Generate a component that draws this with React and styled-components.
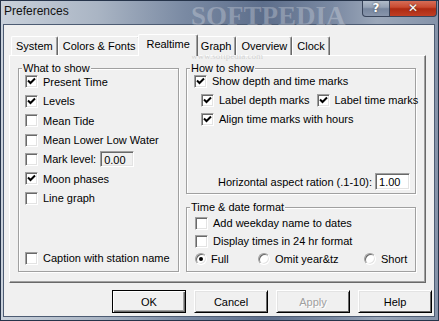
import React from "react";
import styled, { createGlobalStyle } from "styled-components";

const GlobalStyle = createGlobalStyle`
  html, body {
    margin: 0;
    padding: 0;
  }
  body {
    width: 439px;
    height: 321px;
    overflow: hidden;
    font-family: "Liberation Sans", Arial, sans-serif;
    font-size: 11px;
    color: #000;
  }
`;

const Window = styled.div`
  position: relative;
  width: 439px;
  height: 321px;
  box-sizing: border-box;
  display: flex;
  flex-direction: column;
  padding: 0 3px 3px 2px;
  border: 1px solid #26344a;
  background: linear-gradient(
    90deg,
    #c9d1db 0%,
    #aab5c4 22%,
    #7a8aa3 42%,
    #5d6e8b 60%,
    #7a89a2 76%,
    #9ba7b9 86%,
    #8593a9 100%
  );
  overflow: hidden;
`;

const TitleBar = styled.div`
  height: 23px;
  flex: none;
  display: flex;
  align-items: flex-start;
  justify-content: space-between;
`;

const Title = styled.div`
  font-family: "Liberation Sans", Arial, sans-serif;
  font-size: 12px;
  line-height: 14px;
  padding: 3px 0 0 1px;
  color: #111;
`;

const Caps = styled.div`
  position: relative;
  z-index: 3;
  display: flex;
  margin: -1px -2px 0 0;
`;

const HelpCap = styled.div`
  width: 28px;
  height: 17px;
  box-sizing: border-box;
  display: flex;
  align-items: center;
  justify-content: center;
  border: 1px solid #38445a;
  border-top: none;
  border-radius: 0 0 0 4px;
  background-color: #8a98ad;
  background-image: linear-gradient(180deg, #b4bfcd 0%, #95a2b5 45%, #77869e 55%, #8895ab 100%);
  color: #fff;
  font: bold 12px "DejaVu Sans", sans-serif;
  text-shadow: 0 0 2px #333;
`;

const CloseCap = styled(HelpCap)`
  width: 47px;
  border-left: none;
  border-radius: 0 0 4px 0;
  background-color: #c03e24;
  background-image: linear-gradient(180deg, #d8735d 0%, #c94a30 45%, #ad2a12 55%, #c03e24 100%);
`;

const Watermark = styled.div`
  position: absolute;
  left: 190px;
  top: 1px;
  font-family: "Liberation Serif", serif;
  font-weight: bold;
  font-size: 27px;
  line-height: 28px;
  color: rgba(255, 255, 255, 0.25);
  pointer-events: none;
`;

const WatermarkUrl = styled.div`
  position: absolute;
  left: 190px;
  top: 50px;
  font-family: "Liberation Serif", serif;
  font-size: 9px;
  color: rgba(150, 150, 150, 0.35);
  pointer-events: none;
`;

const Client = styled.div`
  flex: 1;
  display: flex;
  flex-direction: column;
  background: #f0f0f0;
  border: 1px solid #4d5c73;
  padding: 8px 4px 3px 5px;
`;

const TabStrip = styled.div`
  height: 22px;
  display: flex;
  align-items: flex-end;
  padding-left: 2px;
`;

const Tab = styled.div`
  position: relative;
  z-index: ${(p) => (p.$active ? 2 : 1)};
  height: ${(p) => (p.$active ? 22 : 19)}px;
  margin: ${(p) => (p.$active ? "0 -2px -1px -2px" : "0")};
  box-sizing: border-box;
  padding: ${(p) => (p.$active ? "3px 7px 0" : "0 4px")};
  display: flex;
  align-items: ${(p) => (p.$active ? "flex-start" : "center")};
  background: #f0f0f0;
  border-top: 1px solid #fff;
  border-left: 1px solid #fff;
  border-right: 1px solid #696969;
  box-shadow: inset -1px 0 0 #a0a0a0;
  border-radius: 2px 2px 0 0;
  white-space: nowrap;
`;

const Pane = styled.div`
  flex: 1;
  display: flex;
  gap: 7px;
  margin-right: 4px;
  padding: 12px 9px 10px 8px;
  border-top: 1px solid #fff;
  border-left: 1px solid #fff;
  border-right: 1px solid #696969;
  border-bottom: 1px solid #696969;
  box-shadow: inset -1px -1px 0 #a0a0a0;
`;

const Column = styled.div`
  display: flex;
  flex-direction: column;
  width: ${(p) => p.$w}px;
`;

const GroupBox = styled.div`
  flex: ${(p) => (p.$grow ? 1 : "none")};
  height: ${(p) => (p.$h ? `${p.$h}px` : "auto")};
  margin-top: ${(p) => p.$mt || 0}px;
  box-sizing: border-box;
  display: flex;
  flex-direction: column;
  border: 1px solid #a0a0a0;
  box-shadow: 1px 1px 0 #fff, inset 1px 1px 0 #fff;
  padding: 0 0 ${(p) => p.$pb || 0}px ${(p) => p.$pl}px;
`;

const Caption = styled.div`
  align-self: flex-start;
  margin: -7px 0 ${(p) => p.$mb}px ${(p) => 3 - p.$pl}px;
  padding: 0 1px;
  line-height: 12px;
  background: #f0f0f0;
`;

const Row = styled.div`
  height: ${(p) => p.$h}px;
  display: flex;
  align-items: center;
  padding-left: ${(p) => p.$indent || 0}px;
  margin-top: ${(p) => (p.$push ? "auto" : "0")};
  white-space: nowrap;
`;

const Option = styled.div`
  display: flex;
  align-items: center;
  gap: ${(p) => p.$gap ?? 5}px;
  width: ${(p) => (p.$w ? `${p.$w}px` : "auto")};
  margin-right: ${(p) => p.$mr || 0}px;
`;

const Box = styled.span`
  width: 13px;
  height: 13px;
  box-sizing: border-box;
  flex: none;
  background: #fff;
  border-top: 1px solid #a0a0a0;
  border-left: 1px solid #a0a0a0;
  border-right: 1px solid #fff;
  border-bottom: 1px solid #fff;
  box-shadow: inset 1px 1px 0 #696969, inset -1px -1px 0 #e3e3e3;
  display: flex;
  align-items: center;
  justify-content: center;
`;

const Round = styled.span`
  width: 12px;
  height: 12px;
  flex: none;
  box-sizing: border-box;
  border-radius: 50%;
  background: #fff;
  border: 1px solid;
  border-color: #a0a0a0 #fff #fff #a0a0a0;
  box-shadow: inset 1px 1px 0 #696969, inset -1px -1px 0 #e3e3e3;
  display: flex;
  align-items: center;
  justify-content: center;
  &::after {
    content: "";
    width: 4px;
    height: 4px;
    border-radius: 50%;
    background: ${(p) => (p.$on ? "#000" : "transparent")};
  }
`;

const Field = styled.div`
  width: ${(p) => p.$w}px;
  height: ${(p) => p.$h}px;
  box-sizing: border-box;
  margin-left: ${(p) => p.$ml}px;
  padding: 1px 0 0 3px;
  display: flex;
  align-items: center;
  background: ${(p) => (p.$disabled ? "#f0f0f0" : "#fff")};
  border-top: 1px solid #a0a0a0;
  border-left: 1px solid #a0a0a0;
  border-right: 1px solid #fff;
  border-bottom: 1px solid #fff;
  box-shadow: inset 1px 1px 0 #696969, inset -1px -1px 0 #e3e3e3;
`;

const AspectRow = styled.div`
  margin-top: auto;
  height: 21px;
  display: flex;
  align-items: center;
  padding-left: 24px;
`;

const Footer = styled.div`
  height: 23px;
  margin: 7px -2px 0 0;
  display: flex;
  justify-content: flex-end;
  gap: 8px;
`;

const Button = styled.div`
  width: 74px;
  height: 23px;
  box-sizing: border-box;
  display: flex;
  align-items: center;
  justify-content: center;
  border: 1px solid;
  border-color: ${(p) => (p.$default ? "#000" : "#fff #000 #000 #fff")};
  box-shadow: ${(p) =>
    p.$default
      ? "inset 1px 1px 0 #fff, inset -1px -1px 0 #696969, inset -2px -2px 0 #a0a0a0"
      : "inset 1px 1px 0 #e3e3e3, inset -1px -1px 0 #696969"};
  color: ${(p) => (p.$disabled ? "#a0a0a0" : "#000")};
  text-shadow: ${(p) => (p.$disabled ? "1px 1px 0 #fff" : "none")};
  background: #f0f0f0;
`;

function Check({ on }) {
  return (
    <Box>
      {on && (
        <svg width="9" height="9" viewBox="0 0 9 9">
          <path d="M1 3.5 L3.5 6 L8 1.5" stroke="#000" strokeWidth="2" fill="none" />
        </svg>
      )}
    </Box>
  );
}

function CheckItem({ on, children }) {
  return (
    <Option>
      <Check on={on} />
      <span>{children}</span>
    </Option>
  );
}

const tabs = ["System", "Colors & Fonts", "Realtime", "Graph", "Overview", "Clock"];

const whatToShow = [
  ["Present Time", true],
  ["Levels", true],
  ["Mean Tide", false],
  ["Mean Lower Low Water", false],
];

export default function App() {
  return (
    <>
      <GlobalStyle />
      <Window>
        <Watermark>SOFTPEDIA</Watermark>
        <WatermarkUrl>www.softpedia.com</WatermarkUrl>
        <TitleBar>
          <Title>Preferences</Title>
          <Caps>
            <HelpCap>?</HelpCap>
            <CloseCap>✕</CloseCap>
          </Caps>
        </TitleBar>
        <Client>
          <TabStrip>
            {tabs.map((t) => (
              <Tab key={t} $active={t === "Realtime"}>
                {t}
              </Tab>
            ))}
          </TabStrip>
          <Pane>
            <Column $w={165}>
              <GroupBox $grow $pl={6} $pb={3}>
                <Caption $pl={6} $mb={-1.7}>
                  What to show
                </Caption>
                {whatToShow.map(([label, on]) => (
                  <Row key={label} $h={19.35}>
                    <CheckItem on={on}>{label}</CheckItem>
                  </Row>
                ))}
                <Row $h={19.35}>
                  <Check />
                  <span style={{ marginLeft: 5 }}>Mark level:</span>
                  <Field $w={34} $h={16} $ml={4} $disabled>
                    0.00
                  </Field>
                </Row>
                <Row $h={19.35}>
                  <CheckItem on>Moon phases</CheckItem>
                </Row>
                <Row $h={19.35}>
                  <CheckItem>Line graph</CheckItem>
                </Row>
                <Row $h={19.35} $push>
                  <CheckItem>Caption with station name</CheckItem>
                </Row>
              </GroupBox>
            </Column>
            <Column $w={230}>
              <GroupBox $h={126} $pl={7} $pb={1}>
                <Caption $pl={7} $mb={-2.5}>
                  How to show
                </Caption>
                <Row $h={19}>
                  <CheckItem on>Show depth and time marks</CheckItem>
                </Row>
                <Row $h={19} $indent={7}>
                  <Option $mr={7}>
                    <Check on />
                    <span>Label depth marks</span>
                  </Option>
                  <CheckItem on>Label time marks</CheckItem>
                </Row>
                <Row $h={19} $indent={7}>
                  <CheckItem on>Align time marks with hours</CheckItem>
                </Row>
                <AspectRow>
                  <span>Horizontal aspect ration (.1-10):</span>
                  <Field $w={35} $h={17} $ml={3}>
                    1.00
                  </Field>
                </AspectRow>
              </GroupBox>
              <GroupBox $grow $mt={13} $pl={8} $pb={1}>
                <Caption $pl={8} $mb={1}>
                  Time &amp; date format
                </Caption>
                <Row $h={18}>
                  <CheckItem>Add weekday name to dates</CheckItem>
                </Row>
                <Row $h={18}>
                  <CheckItem>Display times in 24 hr format</CheckItem>
                </Row>
                <Row $h={18}>
                  <Option $w={63} $gap={4}>
                    <Round $on />
                    <span>Full</span>
                  </Option>
                  <Option $w={106} $gap={5}>
                    <Round />
                    <span>Omit year&amp;tz</span>
                  </Option>
                  <Option $gap={5}>
                    <Round />
                    <span>Short</span>
                  </Option>
                </Row>
              </GroupBox>
            </Column>
          </Pane>
          <Footer>
            <Button $default>OK</Button>
            <Button>Cancel</Button>
            <Button $disabled>Apply</Button>
            <Button>Help</Button>
          </Footer>
        </Client>
      </Window>
    </>
  );
}
